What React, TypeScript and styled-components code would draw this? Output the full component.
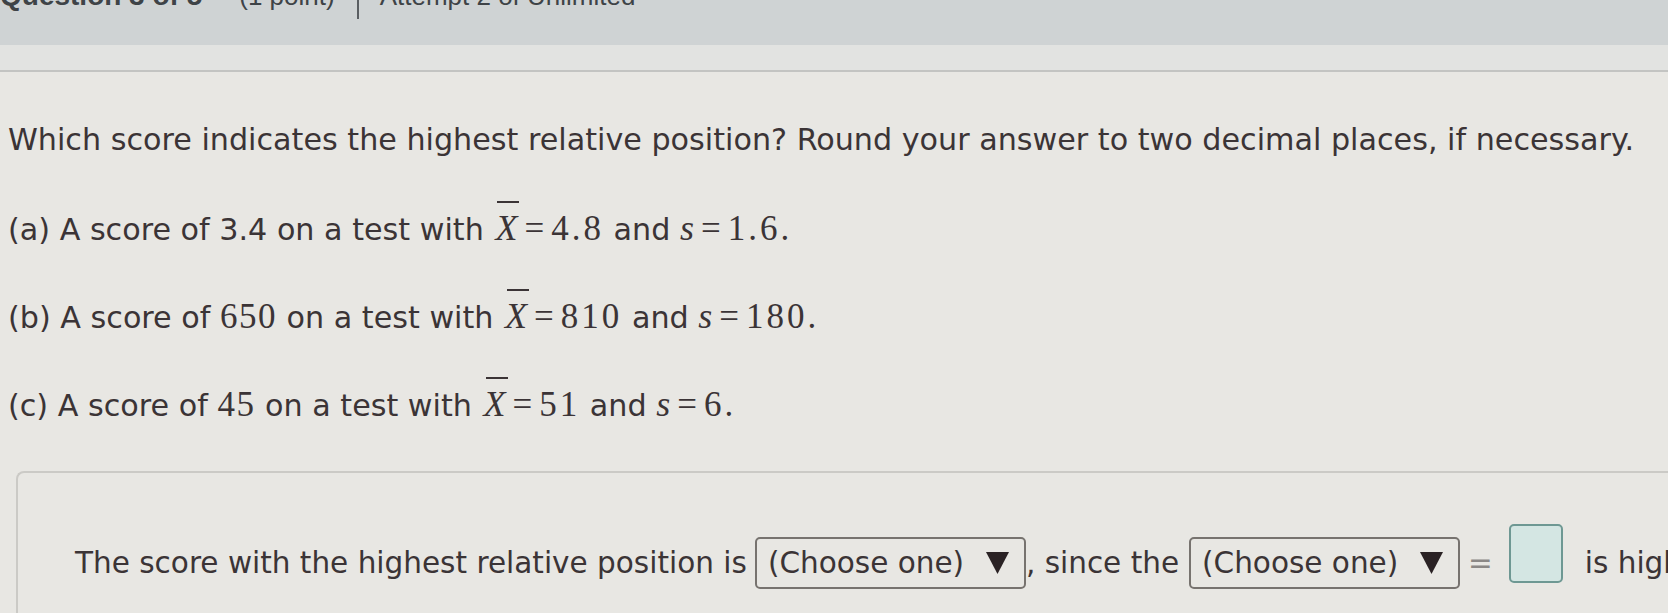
import styled, { createGlobalStyle } from "styled-components";

const GlobalStyle = createGlobalStyle`
  html, body {
    margin: 0;
    padding: 0;
  }
  body {
    background: #e8e7e3;
    font-family: "DejaVu Sans", Verdana, sans-serif;
    color: #3b3436;
  }
`;

const Page = styled.div`
  width: 1668px;
  height: 613px;
  overflow: hidden;
  background: #e8e7e3;
  display: flex;
  flex-direction: column;
`;

const TopBar = styled.div`
  flex: none;
  height: 45px;
  background: #cfd3d4;
  overflow: hidden;
  display: flex;
  align-items: flex-start;
  font-family: "Liberation Sans", Arial, sans-serif;
  color: #3e4347;
  white-space: nowrap;
`;

const HeaderText = styled.span<{ $bold?: boolean; $gap?: number }>`
  font-size: ${(p) => (p.$bold ? 28 : 26)}px;
  font-weight: ${(p) => (p.$bold ? 700 : 400)};
  line-height: 26px;
  margin-top: -17px;
  margin-left: ${(p) => p.$gap ?? 0}px;
`;

const Divider = styled.span`
  width: 2px;
  height: 19px;
  background: #5a5e62;
  margin-left: 22px;
`;

const SubStrip = styled.div`
  flex: none;
  height: 25px;
  background: #e2e3e1;
  border-bottom: 2px solid #c3c4c2;
`;

const Content = styled.div`
  flex: 1;
  display: flex;
  flex-direction: column;
  padding-left: 8px;
  font-size: 30.2px;
`;

const Line = styled.div<{ $top: number }>`
  line-height: 40px;
  height: 40px;
  white-space: nowrap;
  margin-top: ${(p) => p.$top}px;
`;

const Num = styled.span<{ $math?: boolean }>`
  font-family: "Liberation Serif", "Times New Roman", serif;
  font-size: 35px;
  letter-spacing: ${(p) => (p.$math ? 3 : 1.5)}px;
`;

const Var = styled.span`
  font-family: "Liberation Serif", "Times New Roman", serif;
  font-style: italic;
  font-size: 36px;
`;

const BarVar = styled(Var)`
  position: relative;
  display: inline-block;
  line-height: 40px;
  margin-left: 2px;

  &::before {
    content: "";
    position: absolute;
    left: 2px;
    right: -2px;
    top: -7px;
    height: 2px;
    background: #3b3436;
  }
`;

const Eq = styled.span`
  font-family: "Liberation Serif", "Times New Roman", serif;
  font-size: 35px;
  margin: 0 7px;
`;

const AnswerBox = styled.div`
  flex: 1;
  margin: 47px 0 0 8px;
  border: 2px solid #cbcac6;
  border-right: none;
  border-bottom: none;
  border-top-left-radius: 8px;
  padding: 60px 0 0 57px;
  font-size: 29.5px;
`;

const AnswerRow = styled.div`
  display: flex;
  align-items: center;
  height: 60px;
  white-space: nowrap;
`;

const Select = styled.div<{ $gap: number }>`
  flex: none;
  box-sizing: border-box;
  width: 271px;
  height: 52px;
  margin-left: ${(p) => p.$gap}px;
  border: 2px solid #77736f;
  border-radius: 5px;
  display: flex;
  align-items: center;
  justify-content: space-between;
  padding: 0 15px 0 11px;
`;

const Arrow = styled.svg`
  width: 23px;
  height: 22px;
`;

const Gap = styled.span<{ $w: number }>`
  margin-left: ${(p) => p.$w}px;
`;

const EqualSign = styled.span`
  color: #8b8886;
  margin: 0 16px 0 8px;
`;

const InputBox = styled.div`
  flex: none;
  box-sizing: border-box;
  width: 54px;
  height: 59px;
  margin-top: -20px;
  border: 2px solid #6e9893;
  border-radius: 5px;
  background: #d4e6e3;
`;

const ChooseOne = ({ gap }: { gap: number }) => (
  <Select $gap={gap}>
    <span>(Choose one)</span>
    <Arrow viewBox="0 0 23 22">
      <polygon points="0,0 23,0 11.5,22" fill="#2a2224" />
    </Arrow>
  </Select>
);

const Mean = () => <BarVar>X</BarVar>;

export default function App() {
  return (
    <Page>
      <GlobalStyle />
      <TopBar>
        <HeaderText $bold>Question 3 of 5</HeaderText>
        <HeaderText $gap={37}>(1 point)</HeaderText>
        <Divider />
        <HeaderText $gap={21}>Attempt 2 of Unlimited</HeaderText>
      </TopBar>
      <SubStrip />
      <Content>
        <Line $top={48}>
          Which score indicates the highest relative position? Round your
          answer to two decimal places, if necessary.
        </Line>
        <Line $top={48}>
          (a) A score of 3.4 on a test with <Mean />
          <Eq>=</Eq>
          <Num $math>4.8</Num> and <Var>s</Var>
          <Eq>=</Eq>
          <Num $math>1.6.</Num>
        </Line>
        <Line $top={48}>
          (b) A score of <Num>650</Num> on a test with <Mean />
          <Eq>=</Eq>
          <Num $math>810</Num> and <Var>s</Var>
          <Eq>=</Eq>
          <Num $math>180.</Num>
        </Line>
        <Line $top={48}>
          (c) A score of <Num>45</Num> on a test with <Mean />
          <Eq>=</Eq>
          <Num $math>51</Num> and <Var>s</Var>
          <Eq>=</Eq>
          <Num $math>6.</Num>
        </Line>
        <AnswerBox>
          <AnswerRow>
            <span>The score with the highest relative position is</span>
            <ChooseOne gap={8} />
            <span>, since the</span>
            <ChooseOne gap={10} />
            <EqualSign>=</EqualSign>
            <InputBox />
            <Gap $w={22}>is highest.</Gap>
          </AnswerRow>
        </AnswerBox>
      </Content>
    </Page>
  );
}
